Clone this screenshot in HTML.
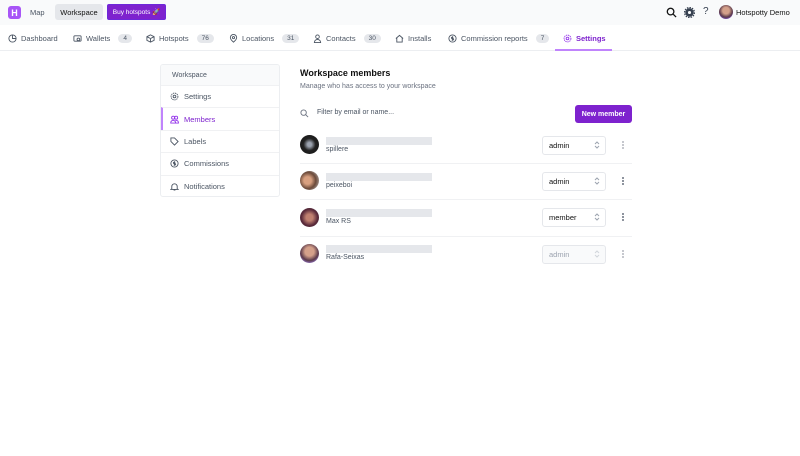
<!DOCTYPE html>
<html><head><style>
*{box-sizing:border-box;margin:0;padding:0}
body{width:800px;height:456px;background:#fff;font-family:"Liberation Sans",sans-serif;color:#374151;position:relative;overflow:hidden;font-size:8px}
.a{position:absolute}
.top{left:0;top:0;width:800px;height:25px;background:#f9fafb}
.tabs{left:0;top:25px;width:800px;height:26px;border-bottom:1px solid #eceef1;background:#fff}
.tab{position:absolute;top:0;height:26px;display:flex;align-items:center;gap:4px;color:#4b5563;font-size:7.5px}
.badge{background:#e5e7eb;border-radius:6px;padding:1px 5px;font-size:6.5px;color:#4b5563;margin-left:4px}
svg{display:block}
.side{left:160px;top:64px;width:120px;height:133px;border:1px solid #eceef1;border-radius:3px;overflow:hidden}
.srow{height:22.4px;border-top:1px solid #f0f1f3;display:flex;align-items:center;gap:5px;padding-left:9px;font-size:7.5px;color:#4b5563}
.sel{position:absolute;left:542px;width:64px;height:19px;border:1px solid #e5e7eb;border-radius:3px;font-size:7.5px;color:#111;padding-left:6px;display:flex;align-items:center}
.dots{position:absolute;left:622px;width:2px}
.dots i{display:block;width:1.6px;height:1.6px;background:#6b7280;border-radius:1px;margin-bottom:1.4px}
.bar{position:absolute;left:326px;width:106px;height:8px;background:#e5e7eb}
.av{position:absolute;left:300px;width:19px;height:19px;border-radius:50%}
.nm{position:absolute;left:326px;font-size:7px;color:#4b5563}
.hr{position:absolute;left:300px;width:332px;height:1px;background:#f0f1f3}
.btn{display:flex;align-items:center;justify-content:center}
</style></head><body>
<div class="a top"></div>
<div class="a btn" style="left:8px;top:6px;width:13px;height:13px;border-radius:3px;background:#a855f7;color:#fff;font-size:9px;font-weight:bold">H</div>
<div class="a" style="left:30px;top:8px;font-size:7.5px;color:#4b5563">Map</div>
<div class="a btn" style="left:55px;top:4px;width:48px;height:16px;background:#e5e7eb;border-radius:3px;font-size:7.5px;color:#111">Workspace</div>
<div class="a btn" style="left:107px;top:4px;width:59px;height:16px;background:#7e22ce;border:1px solid #6d28d9;border-radius:2px;font-size:6.5px;color:#fff">Buy hotspots 🚀</div>
<svg class="a" style="left:666px;top:7px" width="11" height="11" viewBox="0 0 12 12" fill="none" stroke="#111" stroke-width="1.4"><circle cx="5" cy="5" r="3.6"/><path d="M8 8l3 3"/></svg>
<svg class="a" style="left:684px;top:7px" width="11" height="11" viewBox="0 0 12 12"><circle cx="6" cy="6" r="4.6" fill="#374151"/><circle cx="6" cy="6" r="5.4" fill="none" stroke="#374151" stroke-width="1.4" stroke-dasharray="1.6 1.2"/><circle cx="6" cy="6" r="1.7" fill="#f9fafb"/></svg>
<div class="a" style="left:703px;top:6px;font-size:10px;color:#374151">?</div>
<div class="a" style="left:719px;top:5px;width:14px;height:14px;border-radius:50%;background:radial-gradient(circle at 50% 40%,#d4a08a 30%,#5b3a4a 60%,#8b5cf6 90%)"></div>
<div class="a" style="left:736px;top:8px;font-size:7.5px;color:#111">Hotspotty Demo</div>

<div class="a tabs">
<div class="tab" style="left:8px"><svg width="9" height="9" viewBox="0 0 10 10" fill="none" stroke="#4b5563"><circle cx="5" cy="5" r="4"/><path d="M5 1v4h4"/></svg>Dashboard</div>
<div class="tab" style="left:73px"><svg width="9" height="9" viewBox="0 0 10 10" fill="none" stroke="#4b5563"><rect x="1" y="2" width="8" height="6" rx="1"/><circle cx="6" cy="6" r="1.5"/></svg>Wallets<span class="badge">4</span></div>
<div class="tab" style="left:146px"><svg width="9" height="9" viewBox="0 0 10 10" fill="none" stroke="#4b5563"><path d="M5 1l4 2v4l-4 2-4-2V3zM1 3l4 2 4-2M5 5v4"/></svg>Hotspots<span class="badge">76</span></div>
<div class="tab" style="left:229px"><svg width="9" height="9" viewBox="0 0 10 10" fill="none" stroke="#4b5563"><path d="M5 9S1.5 6 1.5 4a3.5 3.5 0 017 0C8.5 6 5 9 5 9z"/><circle cx="5" cy="4" r="1.2"/></svg>Locations<span class="badge">31</span></div>
<div class="tab" style="left:313px"><svg width="9" height="9" viewBox="0 0 10 10" fill="none" stroke="#4b5563"><circle cx="5" cy="3" r="2"/><path d="M1.5 9.5c0-2 1.5-3.5 3.5-3.5s3.5 1.5 3.5 3.5z"/></svg>Contacts<span class="badge">30</span></div>
<div class="tab" style="left:395px"><svg width="9" height="9" viewBox="0 0 10 10" fill="none" stroke="#4b5563"><path d="M1 5L5 1.5 9 5M2 4v5h6V4"/></svg>Installs</div>
<div class="tab" style="left:448px"><svg width="9" height="9" viewBox="0 0 10 10" fill="none" stroke="#4b5563"><circle cx="5" cy="5" r="4"/><path d="M6 3.5H4.5a.8.8 0 000 1.6h1a.8.8 0 010 1.6H4M5 2.5v5"/></svg>Commission reports<span class="badge">7</span></div>
<div class="tab" style="left:563px;color:#7e22ce;font-weight:bold"><svg width="9" height="9" viewBox="0 0 10 10" fill="none" stroke="#9333ea"><circle cx="5" cy="5" r="3.8" stroke-dasharray="1.5 0.8"/><circle cx="5" cy="5" r="1.5"/></svg>Settings</div>
<div class="a" style="left:555px;top:24px;width:57px;height:2px;background:#c084fc"></div>
</div>

<div class="a side">
<div class="srow" style="background:#f9fafb;border-top:0;height:20px;padding-left:11px;font-size:7px">Workspace</div>
<div class="srow"><svg width="9" height="9" viewBox="0 0 10 10" fill="none" stroke="#4b5563"><circle cx="5" cy="5" r="3.8" stroke-dasharray="1.5 0.8"/><circle cx="5" cy="5" r="1.5"/></svg>Settings</div>
<div class="srow" style="color:#7e22ce;border-left:2px solid #c084fc;padding-left:7px"><svg width="9" height="9" viewBox="0 0 10 10" fill="none" stroke="#9333ea"><circle cx="3.5" cy="3" r="1.7"/><circle cx="6.8" cy="3" r="1.7"/><path d="M.8 9c0-2 1.2-3 2.7-3s2.7 1 2.7 3zM6 6h1c1.5 0 2.4 1 2.4 3H6"/></svg>Members</div>
<div class="srow"><svg width="9" height="9" viewBox="0 0 10 10" fill="none" stroke="#4b5563"><path d="M1 1h4l4 4-4 4-4-4z"/></svg>Labels</div>
<div class="srow"><svg width="9" height="9" viewBox="0 0 10 10" fill="none" stroke="#4b5563"><circle cx="5" cy="5" r="4"/><path d="M6 3.5H4.5a.8.8 0 000 1.6h1a.8.8 0 010 1.6H4M5 2.5v5"/></svg>Commissions</div>
<div class="srow"><svg width="9" height="9" viewBox="0 0 10 10" fill="none" stroke="#4b5563"><path d="M2 7.5V5a3 3 0 016 0v2.5l1 .8H1zM4 9h2"/></svg>Notifications</div>
</div>

<div class="a" style="left:300px;top:68px;font-size:9px;color:#111;font-weight:bold">Workspace members</div>
<div class="a" style="left:300px;top:83px;font-size:7px;color:#6b7280">Manage who has access to your workspace</div>
<svg class="a" style="left:300px;top:109px" width="9" height="9" viewBox="0 0 10 10" fill="none" stroke="#6b7280"><circle cx="4" cy="4" r="3"/><path d="M6.3 6.3L9 9"/></svg>
<div class="a" style="left:317px;top:109px;font-size:7px;color:#4b5563">Filter by email or name...</div>
<div class="a btn" style="left:575px;top:105px;width:57px;height:18px;background:#7e22ce;border-radius:3px;color:#fff;font-size:7px;font-weight:bold">New member</div>

<div class="av" style="top:135px;background:radial-gradient(circle,#9ca3af 15%,#222 45%,#111)"></div>
<div class="bar" style="top:137px"></div><div class="nm" style="top:146px">spillere</div>
<div class="sel" style="top:136px">admin</div>
<div class="dots" style="top:141px;opacity:.5"><i></i><i></i><i></i></div>
<div class="hr" style="top:163px"></div>

<div class="av" style="top:171px;background:radial-gradient(circle at 40% 50%,#d8a080 25%,#6b4a3a 55%,#c9c9c9)"></div>
<div class="bar" style="top:173px"></div><div class="nm" style="top:182px">peixeboi</div>
<div class="sel" style="top:172px">admin</div>
<div class="dots" style="top:177px"><i></i><i></i><i></i></div>
<div class="hr" style="top:199px"></div>

<div class="av" style="top:208px;background:radial-gradient(circle,#c08070 25%,#5a2a3a 60%,#3a2030)"></div>
<div class="bar" style="top:209px"></div><div class="nm" style="top:218px">Max RS</div>
<div class="sel" style="top:208px">member</div>
<div class="dots" style="top:213px"><i></i><i></i><i></i></div>
<div class="hr" style="top:236px"></div>

<div class="av" style="top:244px;background:radial-gradient(circle at 50% 40%,#d4a08a 30%,#5b3a4a 60%,#a78bfa 90%)"></div>
<div class="bar" style="top:245px"></div><div class="nm" style="top:254px">Rafa-Seixas</div>
<div class="sel" style="top:245px;background:#f9fafb;color:#9ca3af">admin</div>
<div class="dots" style="top:250px;opacity:.5"><i></i><i></i><i></i></div>

<svg class="a" style="left:594px;top:140px" width="6" height="10" viewBox="0 0 6 10" fill="none" stroke="#9ca3af"><path d="M1 4l2-2 2 2M1 6l2 2 2-2"/></svg>
<svg class="a" style="left:594px;top:176px" width="6" height="10" viewBox="0 0 6 10" fill="none" stroke="#9ca3af"><path d="M1 4l2-2 2 2M1 6l2 2 2-2"/></svg>
<svg class="a" style="left:594px;top:212px" width="6" height="10" viewBox="0 0 6 10" fill="none" stroke="#9ca3af"><path d="M1 4l2-2 2 2M1 6l2 2 2-2"/></svg>
<svg class="a" style="left:594px;top:249px" width="6" height="10" viewBox="0 0 6 10" fill="none" stroke="#d1d5db"><path d="M1 4l2-2 2 2M1 6l2 2 2-2"/></svg>
</body></html>
